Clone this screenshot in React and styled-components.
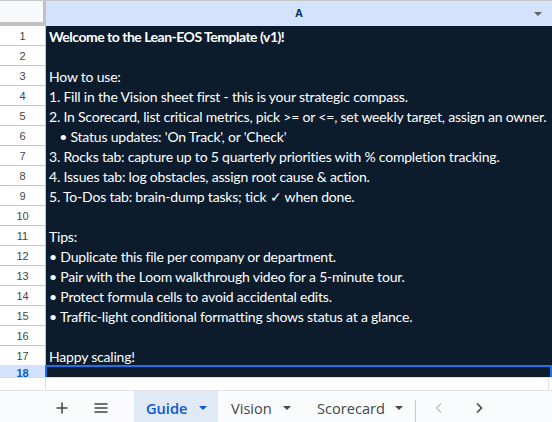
import React from "react";
import styled, { createGlobalStyle } from "styled-components";

const Global = createGlobalStyle`
  html, body { margin: 0; padding: 0; background: #fff; overflow: hidden; }
  * { box-sizing: border-box; }
`;

const Page = styled.div`
  width: 552px;
  height: 422px;
  display: flex;
  flex-direction: column;
  overflow: hidden;
  border-top: 1px solid #c7c7c7;
`;

const HeaderRow = styled.div`
  display: flex;
  height: 25px;
  flex: none;
`;

const Corner = styled.div`
  width: 46px;
  height: 25px;
  background: #f8f9fa;
  border-right: 3px solid #c0c0c0;
  border-bottom: 4px solid #c0c0c0;
`;

const ColHeader = styled.div`
  flex: 1;
  position: relative;
  background: #d3e3fd;
  display: flex;
  align-items: center;
  justify-content: center;
  font-family: "Liberation Sans", Arial, sans-serif;
  font-weight: bold;
  font-size: 11px;
  color: #0b2a5c;
  padding-bottom: 1px;
`;

const HeaderArrow = styled.span`
  position: absolute;
  right: 10px;
  top: 11px;
  width: 0;
  height: 0;
  border-left: 4px solid transparent;
  border-right: 4px solid transparent;
  border-top: 4px solid #5f6368;
`;

const Row = styled.div`
  display: flex;
  height: 20px;
  flex: none;
`;

const RowNum = styled.div`
  width: 46px;
  flex: none;
  background: ${(p) => (p.$active ? "#d3e3fd" : "#fff")};
  border-right: 1px solid #c4c7c5;
  border-bottom: 1px solid #c4c7c5;
  display: flex;
  align-items: center;
  justify-content: center;
  font-family: "Liberation Sans", Arial, sans-serif;
  font-size: 11px;
  font-weight: ${(p) => (p.$active ? "bold" : "normal")};
  color: ${(p) => (p.$active ? "#0b57d0" : "#444746")};
`;

const Cell = styled.div`
  flex: 1;
  background: #0c1c2c;
  color: #ffffff;
  font-family: "Lato", "Carlito", Calibri, sans-serif;
  font-size: 14px;
  letter-spacing: ${(p) => (p.$bold ? "-0.5px" : "-0.2px")};
  font-weight: ${(p) => (p.$bold ? "bold" : "normal")};
  line-height: 19px;
  padding: 1px 3px 0 3px;
  white-space: pre;
  overflow: hidden;
`;

const ActiveRow = styled.div`
  display: flex;
  height: 12px;
  flex: none;
  margin-top: -1px;
`;

const ActiveNum = styled(RowNum)`
  align-items: flex-start;
  padding-top: 2px;
  border-bottom: none;
  line-height: 12px;
  overflow: hidden;
  height: 12px;
`;

const ActiveCell = styled.div`
  flex: 1;
  background: #0c1c2c;
  border: 2px solid #1a73e8;
  border-bottom: none;
  margin-left: -1px;
`;

const ScrollArea = styled.div`
  display: flex;
  height: 13px;
  flex: none;
  border-top: 1px solid #dadce0;
  background: #fff;
`;

const ScrollGutter = styled.div`
  width: 46px;
  border-right: 1px solid #e0e0e0;
`;

const ScrollTrack = styled.div`
  flex: 1;
  border-right: 1px solid #e0e0e0;
  margin-right: 3px;
`;

const TabBar = styled.div`
  flex: 1;
  display: flex;
  align-items: stretch;
  background: #f9fbfd;
  border-top: 1px solid #e1e3e6;
  font-family: "Open Sans", "Roboto", sans-serif;
  font-size: 14.6px;
  color: #444746;
`;

const IconBtn = styled.div`
  width: 39px;
  flex: none;
  display: flex;
  align-items: center;
  justify-content: center;
  color: #444746;
  padding-top: 3px;
`;

const Lead = styled.div`
  width: 42px;
  flex: none;
`;

const TabGap = styled.div`
  width: 14px;
  flex: none;
`;

const Tab = styled.div`
  display: flex;
  align-items: center;
  padding: 3px 0 0 ${(p) => p.$pl || 12}px;
  background: ${(p) => (p.$active ? "#e1e9f7" : "transparent")};
  color: ${(p) => (p.$active ? "#0b57d0" : "#444746")};
  font-weight: ${(p) => (p.$active ? 600 : 400)};
  width: ${(p) => p.$w}px;
  flex: none;
`;

const TabArrow = styled.span`
  margin-left: ${(p) => p.$ml}px;
  width: 0;
  height: 0;
  border-left: 4px solid transparent;
  border-right: 4px solid transparent;
  border-top: 4px solid currentColor;
`;

const Divider = styled.div`
  width: 1px;
  flex: none;
  background: #c4c7c5;
  margin: 9px 0 0 0;
`;

const Nav = styled.div`
  width: 40px;
  flex: none;
  display: flex;
  align-items: center;
  justify-content: center;
  padding-top: 3px;
  margin-left: ${(p) => p.$ml || 0}px;
  color: ${(p) => (p.$disabled ? "#c4c7c5" : "#444746")};
`;

const lines = [
  { t: "Welcome to the Lean-EOS Template (v1)!", b: true },
  { t: "" },
  { t: "How to use:" },
  { t: "1. Fill in the Vision sheet first - this is your strategic compass." },
  { t: "2. In Scorecard, list critical metrics, pick >= or <=, set weekly target, assign an owner." },
  { t: "   • Status updates: 'On Track', or 'Check'" },
  { t: "3. Rocks tab: capture up to 5 quarterly priorities with % completion tracking." },
  { t: "4. Issues tab: log obstacles, assign root cause & action." },
  { t: "5. To-Dos tab: brain-dump tasks; tick ✓ when done." },
  { t: "" },
  { t: "Tips:" },
  { t: "• Duplicate this file per company or department." },
  { t: "• Pair with the Loom walkthrough video for a 5-minute tour." },
  { t: "• Protect formula cells to avoid accidental edits." },
  { t: "• Traffic-light conditional formatting shows status at a glance." },
  { t: "" },
  { t: "Happy scaling!" },
];

const Chevron = ({ dir }) => (
  <svg width="16" height="16" viewBox="0 0 16 16" fill="none">
    <path
      d={dir === "left" ? "M10 3.5 L5.5 8 L10 12.5" : "M6 3.5 L10.5 8 L6 12.5"}
      stroke="currentColor"
      strokeWidth="1.6"
    />
  </svg>
);

export default function App() {
  return (
    <>
      <Global />
      <Page>
        <HeaderRow>
          <Corner />
          <ColHeader>
            A
            <HeaderArrow />
          </ColHeader>
        </HeaderRow>
        {lines.map((l, i) => (
          <Row key={i}>
            <RowNum>{i + 1}</RowNum>
            <Cell $bold={l.b}>{l.t}</Cell>
          </Row>
        ))}
        <ActiveRow>
          <ActiveNum $active>18</ActiveNum>
          <ActiveCell />
        </ActiveRow>
        <ScrollArea>
          <ScrollGutter />
          <ScrollTrack />
        </ScrollArea>
        <TabBar>
          <Lead />
          <IconBtn>
            <svg width="14" height="14" viewBox="0 0 14 14">
              <path d="M7 1.5 V12.5 M1.5 7 H12.5" stroke="#444746" strokeWidth="1.6" />
            </svg>
          </IconBtn>
          <IconBtn>
            <svg width="16" height="14" viewBox="0 0 16 14">
              <path d="M1.5 3 H14.5 M1.5 7 H14.5 M1.5 11 H14.5" stroke="#444746" strokeWidth="1.6" />
            </svg>
          </IconBtn>
          <TabGap />
          <Tab $active $w={84} $pl={12}>
            Guide
            <TabArrow $ml={12} />
          </Tab>
          <Tab $w={86} $pl={13}>
            Vision
            <TabArrow $ml={11} />
          </Tab>
          <Tab $w={111} $pl={13}>
            Scorecard
            <TabArrow $ml={10} />
          </Tab>
          <Divider />
          <Nav $disabled $ml={3}>
            <Chevron dir="left" />
          </Nav>
          <Nav>
            <Chevron dir="right" />
          </Nav>
        </TabBar>
      </Page>
    </>
  );
}
